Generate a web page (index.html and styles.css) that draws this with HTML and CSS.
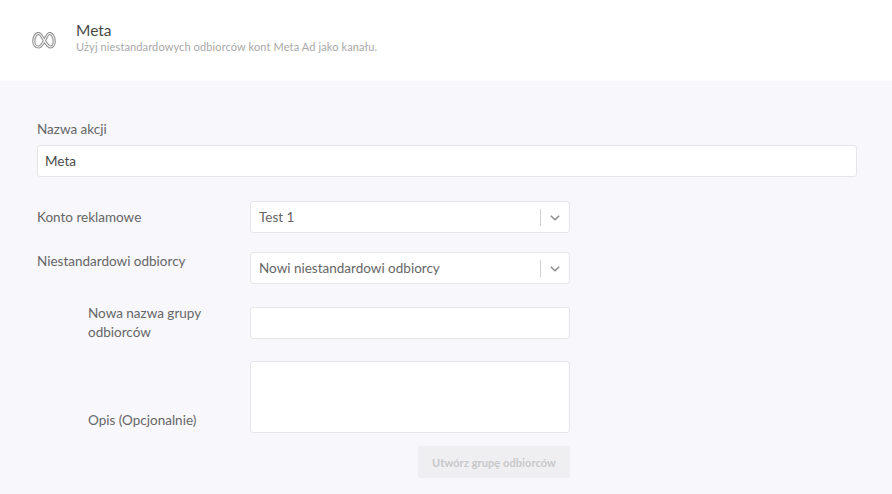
FILE: index.html
```html
<!DOCTYPE html>
<html lang="pl">
<head>
<meta charset="utf-8">
<title>Meta</title>
<link rel="stylesheet" href="styles.css">
</head>
<body>
<header class="header">
  <svg class="logo" width="24" height="17" viewBox="0 0 24 17" fill="none" aria-hidden="true">
    <path stroke="#8c8c8c" stroke-width="3.200" d="M6.500 15C9 15 10.500 12 12 9.500c2-3.700 3.500-8 5.500-8 3 0 4.700 4 4.700 8 0 3.200-1.700 5.500-3.700 5.500-2.500 0-4.500-3.800-6.500-7-2-3.200-3.500-6.500-5.500-6.500-3 0-4.700 4-4.700 8 0 3.200 2.200 5.500 4.700 5.500z"/>
    <path stroke="#fff" stroke-width="1.100" d="M6.500 15C9 15 10.500 12 12 9.500c2-3.700 3.500-8 5.500-8 3 0 4.700 4 4.700 8 0 3.200-1.700 5.500-3.700 5.500-2.500 0-4.500-3.800-6.500-7-2-3.200-3.500-6.500-5.500-6.500-3 0-4.700 4-4.700 8 0 3.200 2.200 5.500 4.700 5.500z"/>
  </svg>
  <div class="header-text">
    <h1 class="title">Meta</h1>
    <p class="subtitle">Użyj niestandardowych odbiorców kont Meta Ad jako kanału.</p>
  </div>
</header>
<main class="content">
  <label class="name-label" for="name">Nazwa akcji</label>
  <div class="field field-full" id="name">Meta</div>

  <div class="row row-account">
    <span class="label">Konto reklamowe</span>
    <div class="field select">
      <span class="select-value">Test 1</span>
      <span class="select-sep"></span>
      <svg class="chev" width="10" height="6" viewBox="0 0 10 6" fill="none" stroke="#8a8a8a" stroke-width="1.500"><path d="M.8.8 5 4.800 9.200.8"/></svg>
    </div>
  </div>

  <div class="row row-audience">
    <span class="label label-top">Niestandardowi odbiorcy</span>
    <div class="field select">
      <span class="select-value">Nowi niestandardowi odbiorcy</span>
      <span class="select-sep"></span>
      <svg class="chev" width="10" height="6" viewBox="0 0 10 6" fill="none" stroke="#8a8a8a" stroke-width="1.500"><path d="M.8.8 5 4.800 9.200.8"/></svg>
    </div>
  </div>

  <div class="row row-sub row-newname">
    <span class="label sub-label">Nowa nazwa grupy odbiorców</span>
    <div class="field"></div>
  </div>

  <div class="row row-sub row-desc">
    <span class="label sub-label label-bottom">Opis (Opcjonalnie)</span>
    <div class="field area"></div>
  </div>

  <div class="actions">
    <button class="btn" type="button" disabled>Utwórz grupę odbiorców</button>
  </div>
</main>
</body>
</html>
```
FILE: styles.css
```css
* { box-sizing: border-box; }
html, body { margin: 0; height: 100%; }
body {
  background: #f7f7fc;
  font-family: "Lato", "Noto Sans", sans-serif;
  color: #666;
  font-size: 13.500px;
  overflow: hidden;
}
.header {
  height: 81px;
  background: #fff;
  display: flex;
  align-items: center;
  padding-left: 32px;
}
.logo { flex: none; margin-top: -1px; }
.header-text { margin-left: 20px; margin-top: -8px; }
.title {
  margin: 0;
  font-size: 15.500px;
  font-weight: 400;
  line-height: 20px;
  color: #4a4a4a;
}
.subtitle {
  margin: 0;
  font-size: 11px;
  line-height: 14px;
  color: #a8a8a8;
  letter-spacing: .12px;
}
.content { padding: 39px 35px 0 37px; }
.name-label {
  display: block;
  line-height: 18px;
  color: #666;
}
.field {
  background: #fff;
  border: 1px solid #e6e6ea;
  border-radius: 3px;
  height: 32px;
  width: 320px;
  flex: none;
}
.field-full {
  width: 100%;
  margin-top: 7px;
  padding-left: 7px;
  line-height: 30px;
  color: #4a4a4a;
}
.row { display: flex; align-items: center; }
.label {
  width: 213px;
  flex: none;
  line-height: 19px;
  color: #666;
}
.label-top { align-self: flex-start; }
.label-bottom { align-self: flex-end; }
.row-account { margin-top: 24px; }
.row-audience { margin-top: 19px; }
.row-newname { margin-top: 20px; }
.row-desc { margin-top: 19px; }
.sub-label { padding-left: 51px; padding-right: 28px; }
.row-desc .sub-label { padding-bottom: 3px; }
.area { height: 72px; }
.select { display: flex; align-items: center; padding-left: 8px; }
.select-value { flex: 1; color: #666; line-height: 30px; }
.select-sep { width: 1px; height: 17px; background: #d0d0d0; }
.chev { margin: 1px 9px 0; }
.actions { width: 533px; display: flex; justify-content: flex-end; margin-top: 13px; }
.btn {
  width: 152px;
  height: 32px;
  border: 0;
  border-radius: 3px;
  background: #efeff1;
  color: #c8c8ca;
  font: 700 11px "Lato", sans-serif;
  letter-spacing: .08px;
  padding: 0;
}
```
